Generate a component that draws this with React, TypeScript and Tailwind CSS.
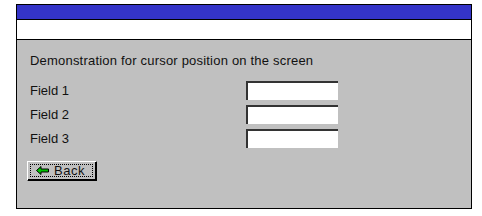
import React from "react";

const font = { fontFamily: '"Liberation Sans", Arial, sans-serif' };

function BackArrow() {
    return (
        <svg width="13" height="9" viewBox="0 0 13 9" className="shrink-0">
            <path d="M0.5 4.5 L5 0.5 L5 3 L12.5 3 L12.5 6 L5 6 L5 8.5 Z" fill="#00c000" stroke="#000" strokeWidth="1" />
        </svg>
    );
}

function Field({ label }: { label: string }) {
    return (
        <div className="flex items-center h-[19px]">
            <span className="w-[216px] text-[13px] leading-none text-[#111]">{label}</span>
            <input
                type="text"
                className="w-[92px] h-[19px] bg-white border-t-2 border-l-2 border-[#333] outline-none"
            />
        </div>
    );
}

export default function App() {
    return (
        <div className="bg-white w-[482px] h-[216px] pt-[4px] pl-[16px]" style={font}>
            <div className="w-[456px] h-[205px] border border-black flex flex-col">
                <div className="h-[14px] bg-[#3434c8] border-b border-black box-content" />
                <div className="h-[19px] bg-white border-b border-black box-content" />
                <div className="flex-1 bg-[#c0c0c0] pl-[13px] pt-[14px]">
                    <p className="text-[13px] leading-none text-[#111] tracking-[0.2px]">
                        Demonstration for cursor position on the screen
                    </p>
                    <div className="flex flex-col gap-[5px] mt-[14px]">
                        <Field label="Field 1" />
                        <Field label="Field 2" />
                        <Field label="Field 3" />
                    </div>
                    <button className="mt-[13px] ml-[-3px] w-[70px] h-[20px] border-t border-l border-white border-r border-b border-r-black border-b-black bg-[#c0c0c0] p-0 block">
                        <div className="w-full h-full border border-black border-t-0 border-l-0 p-[2px]">
                            <div className="w-full h-full border border-dotted border-black flex items-center pl-[5px] gap-[5px]">
                                <BackArrow />
                                <span className="text-[13px] leading-none text-[#111] tracking-[0.5px]">Back</span>
                            </div>
                        </div>
                    </button>
                </div>
            </div>
        </div>
    );
}
